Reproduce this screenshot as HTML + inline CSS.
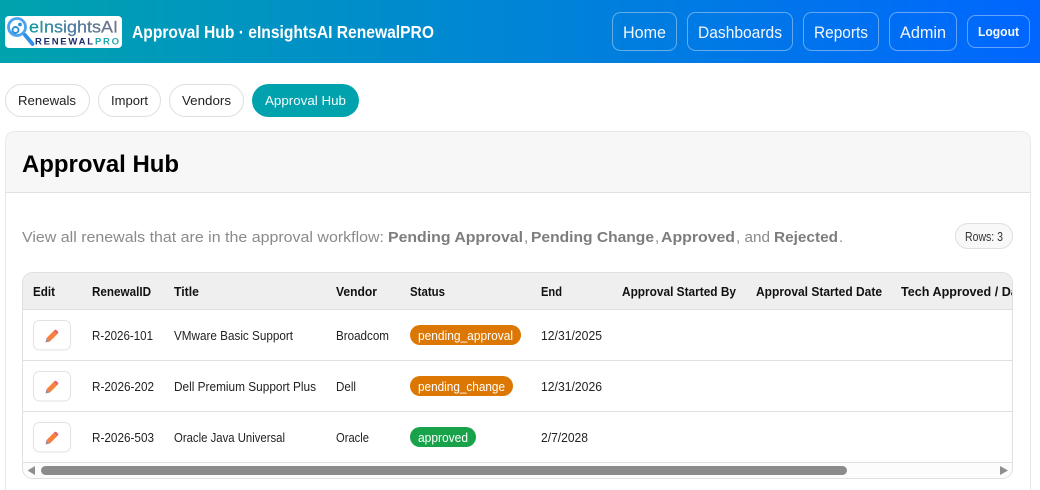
<!DOCTYPE html>
<html lang="en">
<head>
<meta charset="utf-8">
<title>Approval Hub</title>
<style>
html,body{margin:0;padding:0;background:#fff;width:1040px;height:490px;overflow:hidden}
svg{display:block}
text{font-family:"Liberation Sans",sans-serif}
.b{font-weight:700}
.nav{font-size:16.5px;fill:#f2f7ff}
.pill{font-size:13px;fill:#222}
.th{font-size:12.5px;font-weight:700;fill:#111}
.td{font-size:12.5px;fill:#222}
.bd{font-size:12.5px;fill:#fff}
.p{font-size:15px;fill:#8a8a8a}
.pb{font-size:15px;font-weight:700;fill:#7d7d7d}
</style>
</head>
<body>
<svg width="1040" height="490" viewBox="0 0 1040 490" xmlns="http://www.w3.org/2000/svg">
<defs>
<linearGradient id="hd" gradientUnits="userSpaceOnUse" x1="0" y1="0" x2="1040" y2="0">
<stop offset="0" stop-color="#00a3ad"/><stop offset="1" stop-color="#0066ff"/>
</linearGradient>
<linearGradient id="lg" gradientUnits="userSpaceOnUse" x1="29" y1="0" x2="118" y2="0">
<stop offset="0" stop-color="#129aa0"/><stop offset=".45" stop-color="#4a7a9f"/><stop offset="1" stop-color="#6f7488"/>
</linearGradient>
<clipPath id="tw"><rect x="23" y="273" width="989" height="205" rx="9"/></clipPath>
<g id="pen">
<path d="M1 8.6 L8.2 1.4 L11.6 4.8 L4.400 12 Z" fill="#f9803a"/>
<path d="M8.2 1.4 L9.300 .4 Q10 0 10.700 .4 L12.600 2.300 Q13 3 12.600 3.700 L11.600 4.800 Z" fill="#ea5f6c"/>
<path d="M1 8.600 L4.400 12 L0 13 Z" fill="#a08a8c"/>
</g>
</defs>

<rect x="0" y="0" width="1040" height="63" fill="url(#hd)"/>

<rect x="5" y="16" width="117" height="32" rx="4" fill="#fff"/>
<circle cx="17" cy="27" r="8.500" fill="none" stroke="#4aa3f0" stroke-width="2.800"/>
<circle cx="15.500" cy="30" r="3" fill="none" stroke="#2a8fd8" stroke-width="1.900"/>
<circle cx="20" cy="24.500" r="1.900" fill="#2a8fd8"/>
<path d="M25 35 L32.500 44" stroke="#2f8fe8" stroke-width="3.800" stroke-linecap="round"/>
<text x="29" y="32.500" font-size="17" fill="url(#lg)" stroke="url(#lg)" stroke-width=".25" textLength="89" lengthAdjust="spacingAndGlyphs">eInsightsAI</text>
<text x="35" y="44.500" font-size="9.500" class="b" fill="#1c2b6e" textLength="58" lengthAdjust="spacing">RENEWAL</text>
<text x="95" y="44.500" font-size="9.500" class="b" fill="#22a7b5" textLength="24" lengthAdjust="spacing">PRO</text>

<text x="132" y="38" font-size="17.500" class="b" fill="#fff" textLength="302" lengthAdjust="spacingAndGlyphs">Approval Hub · eInsightsAI RenewalPRO</text>

<g fill="none" stroke="#fff" stroke-opacity=".38">
<rect x="612.500" y="12.500" width="64" height="38" rx="8"/>
<rect x="687.500" y="12.500" width="105" height="38" rx="8"/>
<rect x="803.500" y="12.500" width="75" height="38" rx="8"/>
<rect x="889.500" y="12.500" width="67" height="38" rx="8"/>
<rect x="967.500" y="15.500" width="62" height="32" rx="8"/>
</g>
<text x="623" y="38" class="nav" textLength="43" lengthAdjust="spacingAndGlyphs">Home</text>
<text x="698" y="38" class="nav" textLength="84" lengthAdjust="spacingAndGlyphs">Dashboards</text>
<text x="814" y="38" class="nav" textLength="54" lengthAdjust="spacingAndGlyphs">Reports</text>
<text x="900" y="38" class="nav" textLength="46" lengthAdjust="spacingAndGlyphs">Admin</text>
<text x="978" y="36" font-size="12.500" class="b" fill="#f4f8ff" textLength="41" lengthAdjust="spacingAndGlyphs">Logout</text>

<g fill="#fff" stroke="#dedede">
<rect x="5.500" y="84.500" width="84" height="32" rx="16"/>
<rect x="98.500" y="84.500" width="62" height="32" rx="16"/>
<rect x="169.500" y="84.500" width="74" height="32" rx="16"/>
</g>
<rect x="252" y="84" width="107" height="33" rx="16.500" fill="#00a3ad"/>
<text x="18" y="105" class="pill" textLength="58" lengthAdjust="spacingAndGlyphs">Renewals</text>
<text x="111" y="105" class="pill" textLength="37" lengthAdjust="spacingAndGlyphs">Import</text>
<text x="182" y="105" class="pill" textLength="49" lengthAdjust="spacingAndGlyphs">Vendors</text>
<text x="265" y="105" class="pill" style="fill:#f6fcfc" textLength="81" lengthAdjust="spacingAndGlyphs">Approval Hub</text>

<path d="M5.500 490 V142 Q5.500 131.500 16 131.500 H1020 Q1030.500 131.500 1030.500 142 V490" fill="#fff" stroke="#e8e8e8"/>
<path d="M6 192 V142 Q6 132 16 132 H1020 Q1030 132 1030 142 V192 Z" fill="#f7f7f7"/>
<line x1="6" y1="192.500" x2="1030" y2="192.500" stroke="#e0e0e0"/>
<text x="22" y="172" font-size="24" class="b" fill="#000" textLength="157" lengthAdjust="spacingAndGlyphs">Approval Hub</text>

<text x="22" y="242" class="p" textLength="362" lengthAdjust="spacingAndGlyphs">View all renewals that are in the approval workflow:</text>
<text x="388" y="242" class="pb" textLength="135" lengthAdjust="spacingAndGlyphs">Pending Approval</text>
<text x="524" y="242" class="p">,</text>
<text x="531" y="242" class="pb" textLength="123" lengthAdjust="spacingAndGlyphs">Pending Change</text>
<text x="655" y="242" class="p">,</text>
<text x="661" y="242" class="pb" textLength="74" lengthAdjust="spacingAndGlyphs">Approved</text>
<text x="736" y="242" class="p" textLength="34" lengthAdjust="spacingAndGlyphs">, and</text>
<text x="774" y="242" class="pb" textLength="64" lengthAdjust="spacingAndGlyphs">Rejected</text>
<text x="839" y="242" class="p">.</text>

<rect x="955.500" y="223.500" width="57" height="25" rx="12.500" fill="#f8f8f8" stroke="#dfdfdf"/>
<text x="965" y="241" font-size="12.500" fill="#333" textLength="38" lengthAdjust="spacingAndGlyphs">Rows: 3</text>

<g clip-path="url(#tw)">
<rect x="23" y="273" width="989" height="36" fill="#efefef"/>
<rect x="23" y="463" width="989" height="15" fill="#fcfcfc"/>
<rect x="41" y="466" width="806" height="9" rx="4.500" fill="#8b8b8b"/>
<path d="M35 466 V475 L27.500 470.500 Z" fill="#8f8f8f"/>
<path d="M1000 466 V475 L1008 470.500 Z" fill="#8f8f8f"/>
<text x="33" y="296" class="th" textLength="22" lengthAdjust="spacingAndGlyphs">Edit</text>
<text x="92" y="296" class="th" textLength="59" lengthAdjust="spacingAndGlyphs">RenewalID</text>
<text x="174" y="296" class="th" textLength="25" lengthAdjust="spacingAndGlyphs">Title</text>
<text x="336" y="296" class="th" textLength="41" lengthAdjust="spacingAndGlyphs">Vendor</text>
<text x="410" y="296" class="th" textLength="35" lengthAdjust="spacingAndGlyphs">Status</text>
<text x="541" y="296" class="th" textLength="21" lengthAdjust="spacingAndGlyphs">End</text>
<text x="622" y="296" class="th" textLength="114" lengthAdjust="spacingAndGlyphs">Approval Started By</text>
<text x="756" y="296" class="th" textLength="126" lengthAdjust="spacingAndGlyphs">Approval Started Date</text>
<text x="901" y="296" class="th" textLength="128" lengthAdjust="spacingAndGlyphs">Tech Approved / Date</text>
</g>

<g stroke="#e0e0e0">
<line x1="23" y1="309.500" x2="1012" y2="309.500"/>
<line x1="23" y1="360.500" x2="1012" y2="360.500"/>
<line x1="23" y1="411.500" x2="1012" y2="411.500"/>
<line x1="23" y1="462.500" x2="1012" y2="462.500"/>
</g>
<rect x="22.500" y="272.500" width="990" height="206" rx="10" fill="none" stroke="#e0e0e0"/>

<g fill="#fff" stroke="#e2e2e2">
<rect x="33.500" y="320.500" width="37" height="29.500" rx="6"/>
<rect x="33.500" y="371.500" width="37" height="29.500" rx="6"/>
<rect x="33.500" y="422.500" width="37" height="29.500" rx="6"/>
</g>
<use href="#pen" x="45.500" y="329.500"/>
<use href="#pen" x="45.500" y="380.500"/>
<use href="#pen" x="45.500" y="431.500"/>

<text x="92" y="340" class="td" textLength="61" lengthAdjust="spacingAndGlyphs">R-2026-101</text>
<text x="92" y="391" class="td" textLength="62" lengthAdjust="spacingAndGlyphs">R-2026-202</text>
<text x="92" y="442" class="td" textLength="62" lengthAdjust="spacingAndGlyphs">R-2026-503</text>
<text x="174" y="340" class="td" textLength="119" lengthAdjust="spacingAndGlyphs">VMware Basic Support</text>
<text x="174" y="391" class="td" textLength="142" lengthAdjust="spacingAndGlyphs">Dell Premium Support Plus</text>
<text x="174" y="442" class="td" textLength="111" lengthAdjust="spacingAndGlyphs">Oracle Java Universal</text>
<text x="336" y="340" class="td" textLength="53" lengthAdjust="spacingAndGlyphs">Broadcom</text>
<text x="336" y="391" class="td" textLength="20" lengthAdjust="spacingAndGlyphs">Dell</text>
<text x="336" y="442" class="td" textLength="33" lengthAdjust="spacingAndGlyphs">Oracle</text>

<rect x="410" y="325" width="111" height="20" rx="10" fill="#dc7703"/>
<rect x="410" y="376" width="103" height="20" rx="10" fill="#dc7703"/>
<rect x="410" y="427" width="66" height="20" rx="10" fill="#18a34a"/>
<text x="418" y="340" class="bd" textLength="95" lengthAdjust="spacingAndGlyphs">pending_approval</text>
<text x="418" y="391" class="bd" textLength="87" lengthAdjust="spacingAndGlyphs">pending_change</text>
<text x="418" y="442" class="bd" textLength="50" lengthAdjust="spacingAndGlyphs">approved</text>

<text x="541" y="340" class="td" textLength="61" lengthAdjust="spacingAndGlyphs">12/31/2025</text>
<text x="541" y="391" class="td" textLength="61" lengthAdjust="spacingAndGlyphs">12/31/2026</text>
<text x="541" y="442" class="td" textLength="47" lengthAdjust="spacingAndGlyphs">2/7/2028</text>
</svg>
</body>
</html>
